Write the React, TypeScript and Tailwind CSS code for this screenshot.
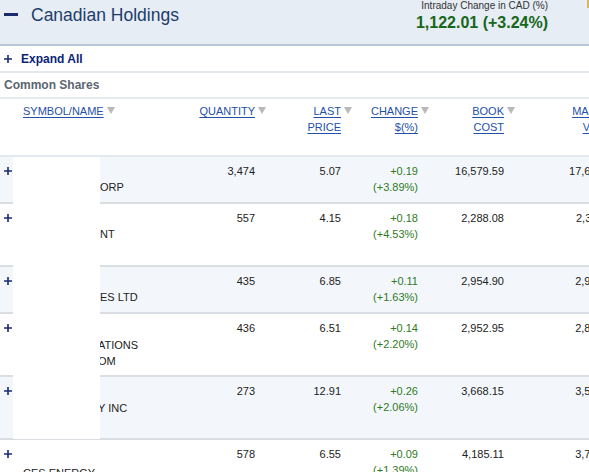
import React from "react";

type Line = { text: string; indent?: number; drop?: number };

type Holding = {
  qty: string;
  last: string;
  chg: string;
  pct: string;
  book: string;
  mkt: string;
  name: Line[];
};

const holdings: Holding[] = [
  { qty: "3,474", last: "5.07", chg: "+0.19", pct: "(+3.89%)", book: "16,579.59", mkt: "17,613.18", name: [{ text: "" }, { text: "ORP", indent: 77 }] },
  { qty: "557", last: "4.15", chg: "+0.18", pct: "(+4.53%)", book: "2,288.08", mkt: "2,311.55", name: [{ text: "" }, { text: "NT", indent: 77 }, { text: "" }] },
  { qty: "435", last: "6.85", chg: "+0.11", pct: "(+1.63%)", book: "2,954.90", mkt: "2,979.75", name: [{ text: "" }, { text: "ES LTD", indent: 77 }] },
  { qty: "436", last: "6.51", chg: "+0.14", pct: "(+2.20%)", book: "2,952.95", mkt: "2,838.36", name: [{ text: "" }, { text: "ATIONS", indent: 75, drop: 1 }, { text: "OM", indent: 75, drop: 1 }] },
  { qty: "273", last: "12.91", chg: "+0.26", pct: "(+2.06%)", book: "3,668.15", mkt: "3,524.43", name: [{ text: "" }, { text: "Y INC", indent: 75, drop: 1 }, { text: "" }] },
  { qty: "578", last: "6.55", chg: "+0.09", pct: "(+1.39%)", book: "4,185.11", mkt: "3,785.90", name: [{ text: "" }, { text: "CES ENERGY", indent: 0, drop: 3 }] },
];

function Plus({ size = 8 }: { size?: number }) {
  return (
    <svg width={size} height={size} viewBox="0 0 8 8">
      <path d="M4 0V8M0 4H8" stroke="#1b2a78" strokeWidth="1.6" />
    </svg>
  );
}

function Tri() {
  return (
    <svg
      width="8"
      height="7"
      viewBox="0 0 8 7"
      className="absolute left-full top-[4px] ml-[3px]"
    >
      <path d="M0 0H8L4 7Z" fill="#b9b9b9" />
    </svg>
  );
}

function HeadLink({ lines, right }: { lines: string[]; right?: boolean }) {
  return (
    <div
      className={`relative text-[11px] leading-[16px] text-[#2350a8] underline underline-offset-[2px] ${
        right ? "text-right" : "text-left"
      }`}
    >
      {lines.map((l, i) => (
        <div key={i}>{l}</div>
      ))}
      <Tri />
    </div>
  );
}

export default function App() {
  return (
    <div className="relative w-[589px] h-[472px] overflow-hidden bg-white font-['Liberation_Sans',Arial,sans-serif] text-[#222]">
      {/* page header */}
      <div className="flex h-[46px] justify-between border-b-2 border-[#b9c7d5] bg-[#e6edf5]">
        <div className="flex h-[29px] items-center">
          <span className="ml-[4px] h-[3px] w-[14px] bg-[#1c2b6b]" />
          <span className="ml-[13px] text-[17.5px] leading-[20px] text-[#1d3c6b]">
            Canadian Holdings
          </span>
        </div>
        <div className="mr-[41px] flex flex-col items-end">
          <span className="text-[10px] leading-[12px] text-[#333]">
            Intraday Change in CAD (%)
          </span>
          <span className="mt-[1px] text-[16px] font-bold leading-[20px] text-[#17661a]">
            1,122.01 (+3.24%)
          </span>
        </div>
      </div>
      <span className="absolute left-[587px] top-0 h-[8px] w-[2px] bg-[#dcb65c]" />

      <div className="flex h-[27px] items-center border-b-2 border-[#e4e9ee] pl-[4px]">
        <Plus size={8} />
        <span className="ml-[9px] text-[12px] font-bold text-[#0b1f78]">
          Expand All
        </span>
      </div>
      <div className="flex h-[26px] items-center border-b-2 border-[#e4e9ee] pl-[4px]">
        <span className="text-[12px] font-bold text-[#5b6670]">
          Common Shares
        </span>
      </div>

      {/* table */}
      <div className="w-[660px]">
        <div className="flex h-[56px] items-start pt-[4px]">
          <div className="flex w-[185px] pl-[23px]">
            <HeadLink lines={["SYMBOL/NAME"]} />
          </div>
          <div className="flex w-[84px] justify-end pr-[14px]">
            <HeadLink lines={["QUANTITY"]} right />
          </div>
          <div className="flex w-[86px] justify-end pr-[14px]">
            <HeadLink lines={["LAST", "PRICE"]} right />
          </div>
          <div className="flex w-[77px] justify-end pr-[14px]">
            <HeadLink lines={["CHANGE", "$(%)"]} right />
          </div>
          <div className="flex w-[86px] justify-end pr-[14px]">
            <HeadLink lines={["BOOK", "COST"]} right />
          </div>
          <div className="flex w-[114px] justify-end pr-[14px]">
            <HeadLink lines={["MARKET", "VALUE"]} right />
          </div>
        </div>

        {holdings.map((h, i) => (
          <div
            key={i}
            className={`flex border-t-2 pb-[7px] pt-[6px] text-[11px] leading-[16px] ${
              i === 0 ? "border-[#e3e9ef]" : "border-[#dadee2]"
            } ${i % 2 === 0 ? "bg-[#f3f7fb]" : "bg-white"}`}
          >
            <div className="flex h-[16px] w-[13px] items-center pl-[4px]">
              <Plus size={8} />
            </div>
            <div className="w-[172px] pl-[10px]">
              {h.name.map((l, j) => (
                <div key={j} className="h-[16px] whitespace-nowrap">
                  <span
                    className="relative"
                    style={{ paddingLeft: l.indent ?? 0, top: l.drop ?? 0 }}
                  >
                    {l.text}
                  </span>
                </div>
              ))}
            </div>
            <div className="w-[84px] pr-[14px] text-right">{h.qty}</div>
            <div className="w-[86px] pr-[14px] text-right">{h.last}</div>
            <div className="w-[77px] pr-[14px] text-right text-[#2f7a1f]">
              <div>{h.chg}</div>
              <div>{h.pct}</div>
            </div>
            <div className="w-[86px] pr-[14px] text-right">{h.book}</div>
            <div className="w-[114px] pr-[14px] text-right">{h.mkt}</div>
          </div>
        ))}
      </div>

      {/* redacted block */}
      <div className="absolute left-[13px] top-[157px] h-[282px] w-[87px] bg-white" />
    </div>
  );
}
